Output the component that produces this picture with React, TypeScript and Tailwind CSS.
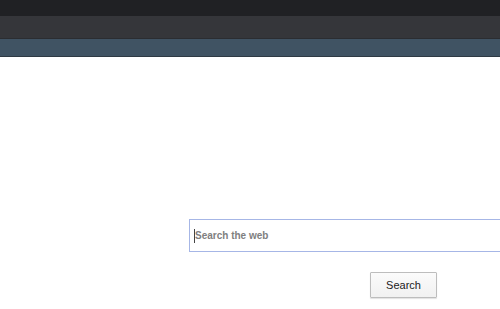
import React from 'react';

const App: React.FC = () => {
  return (
    <div className="h-[309px] w-[500px] overflow-hidden bg-white font-['Liberation_Sans',Arial,sans-serif]">
      <div className="h-[16px] bg-[#202124]" />
      <div className="h-[22px] bg-[#35363a]" />
      <div className="h-[1px] bg-[#2b2d31]" />
      <div className="h-[17px] bg-[#405363]" />
      <div className="h-[1px] bg-[#2f3a44]" />

      <div className="pt-[162px] pl-[189px]">
        <div className="flex h-[33px] w-[430px] items-center border border-[#a6b6e6] bg-white pl-[4px]">
          <span className="h-[14px] w-px bg-[#444]" />
          <span className="text-[10px] font-bold text-[#808080]">Search the web</span>
        </div>
        <div className="mt-[20px] pl-[181px]">
          <button className="h-[26px] w-[67px] rounded-[1px] border border-[#bdbdbd] bg-gradient-to-b from-[#fbfbfb] to-[#f1f1f1] text-[11px] text-[#222] shadow-[0_1px_1px_rgba(0,0,0,0.12)]">
            Search
          </button>
        </div>
      </div>
    </div>
  );
};

export default App;
